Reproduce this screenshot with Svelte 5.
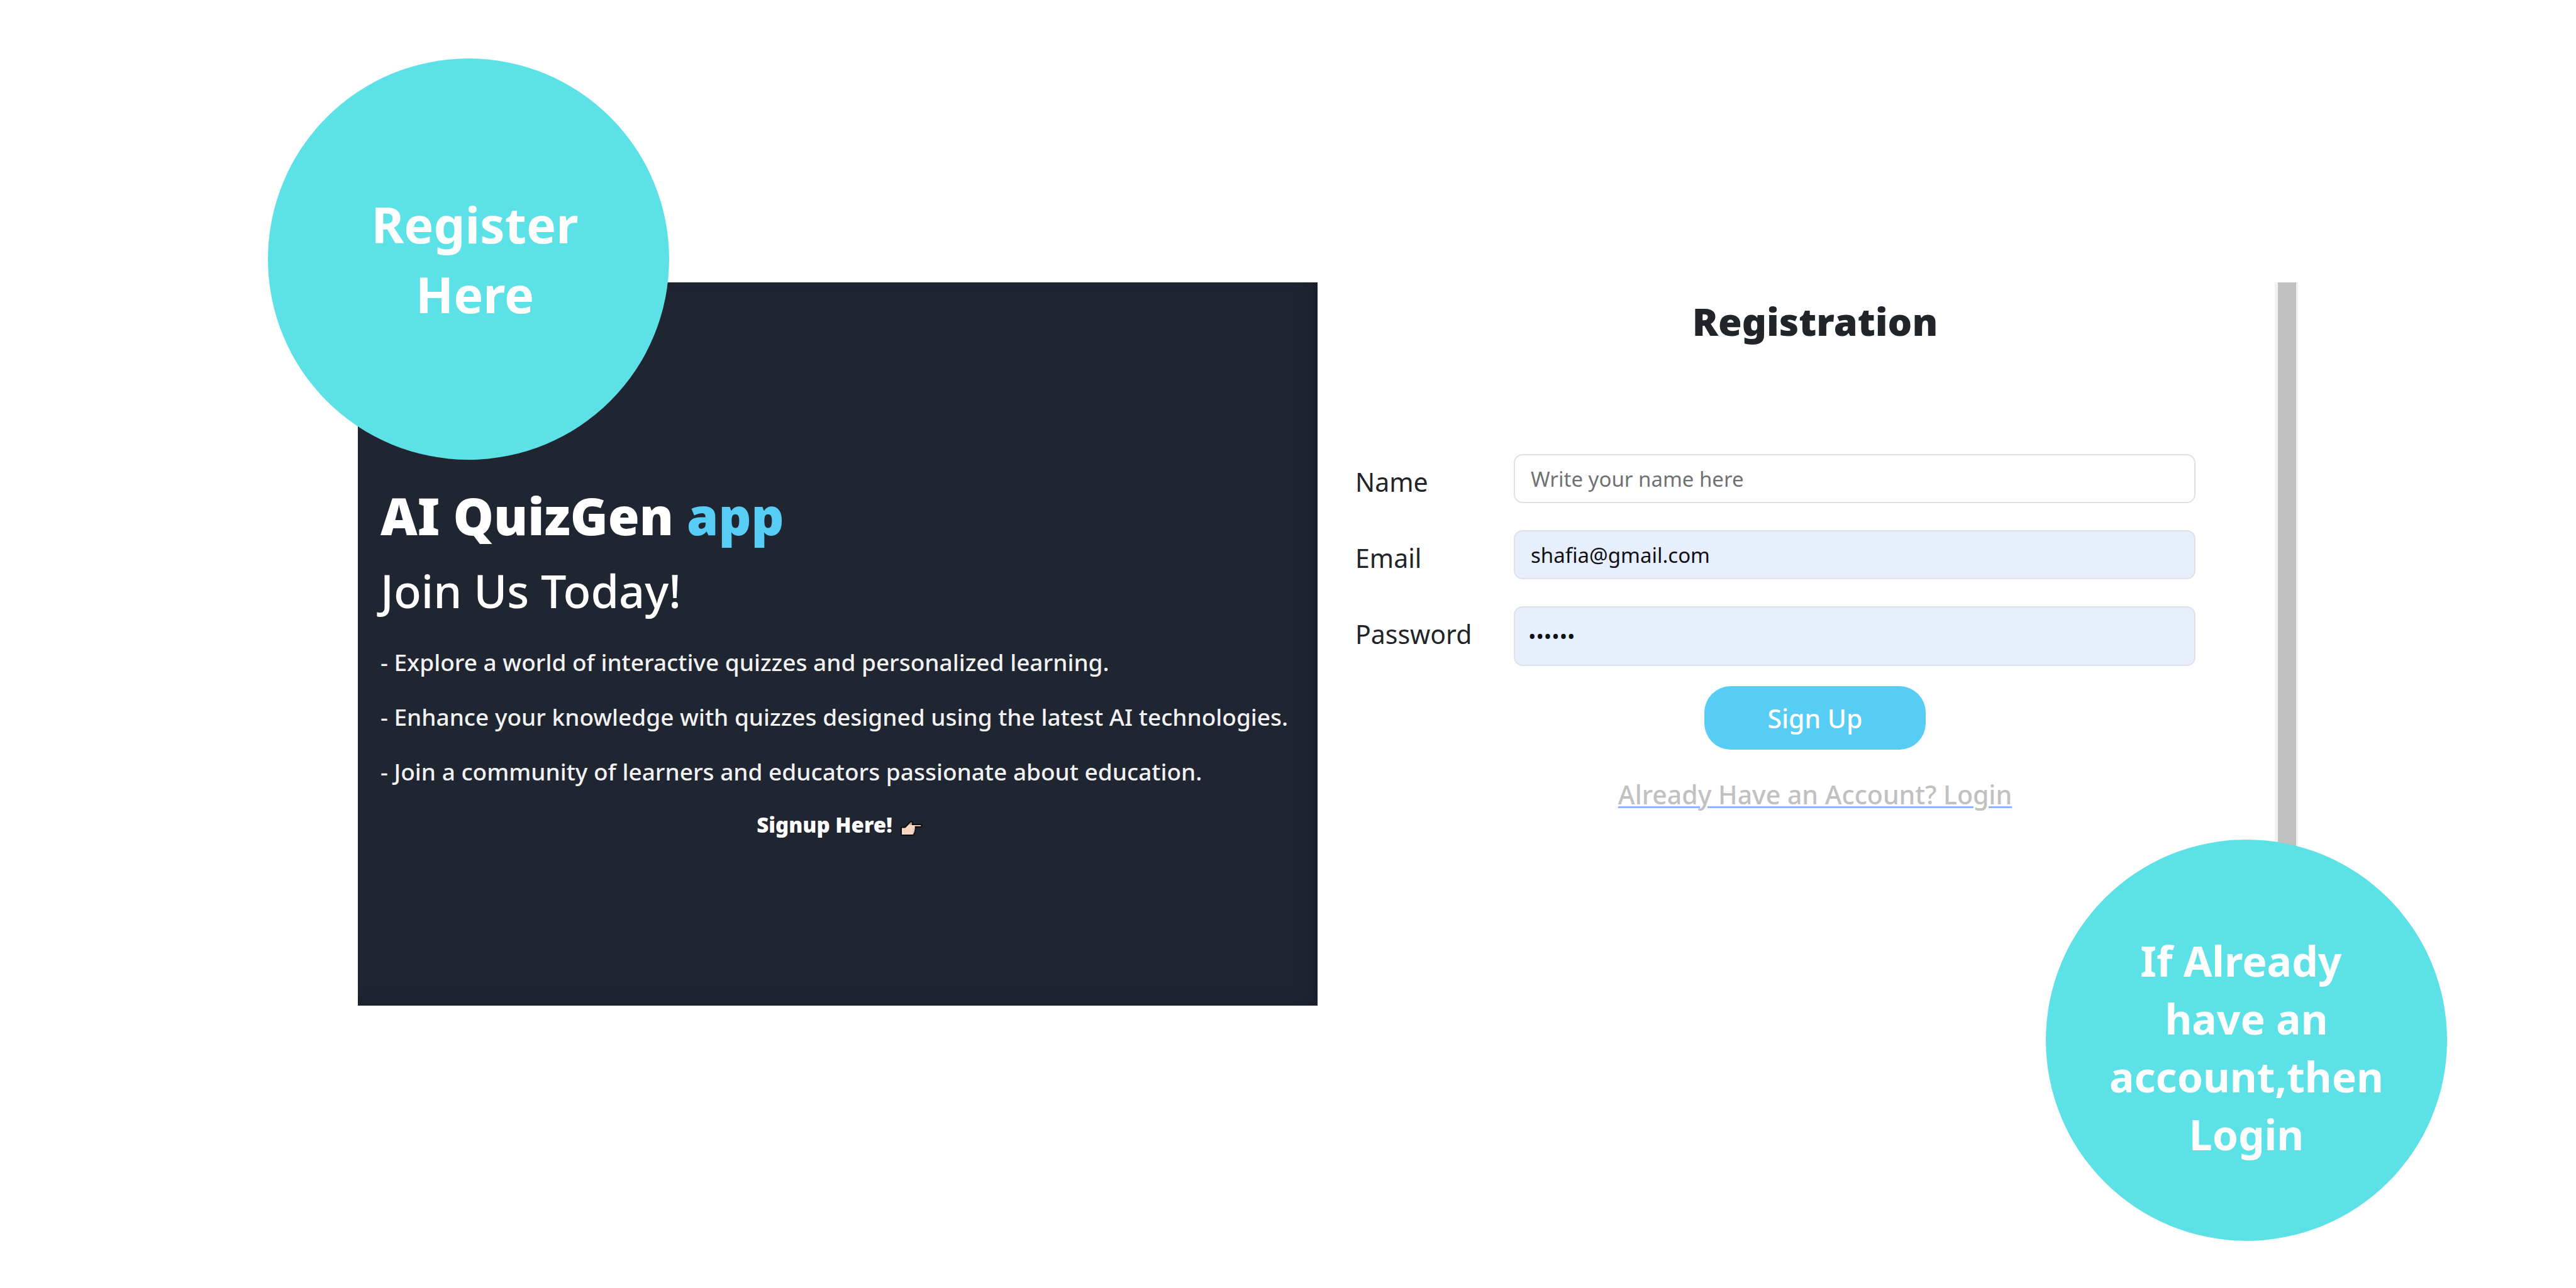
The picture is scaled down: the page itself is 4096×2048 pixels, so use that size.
<script>
  let name = $state('');
  let email = $state('shafia@gmail.com');
  let password = $state('secret');

  const points = [
    'Explore a world of interactive quizzes and personalized learning.',
    'Enhance your knowledge with quizzes designed using the latest AI technologies.',
    'Join a community of learners and educators passionate about education.'
  ];
</script>

<main class="page">
  <div class="window">
    <section class="intro">
      <h1>AI QuizGen <span class="accent">app</span></h1>
      <h2>Join Us Today!</h2>
      <div class="points">
        {#each points as point}
          <p>- {point}</p>
        {/each}
      </div>
      <p class="cue">
        <span>Signup Here!</span>
        <svg class="hand" viewBox="0 0 36 26" aria-hidden="true">
          <path
            d="M2 11.5 H8 L16 3.5 Q18.5 1.5 20 4 L19.5 7 H33 Q34.5 7.2 34.5 8.8 Q34.5 10.6 33 10.8 H24.5 Q25.5 13 24 14.5 Q25 16.5 23.5 18 Q24 20 22.5 21 Q22.5 24 20 24 H2 Z"
            fill="#f7d7c4"
            stroke="#0b0c10"
            stroke-width="2"
            stroke-linejoin="round"
          />
          <path d="M13.5 7 L16.5 4.2 Q18.4 3 19 4.5 L18.4 7.5 Z" fill="#b8937c" />
          <path d="M20 14.5 H24 M20 18 H23.5 M19.5 21 H22" stroke="#d9b29c" stroke-width="1" fill="none" />
        </svg>
      </p>
    </section>

    <section class="signup">
      <h2>Registration</h2>
      <form onsubmit={(e) => e.preventDefault()}>
        <div class="fields">
          <label for="name">Name</label>
          <input id="name" type="text" placeholder="Write your name here" bind:value={name} />
          <label for="email">Email</label>
          <input id="email" class="filled" type="email" bind:value={email} />
          <label for="password">Password</label>
          <input id="password" class="filled tall" type="password" bind:value={password} />
        </div>
        <button type="submit">Sign Up</button>
      </form>
      <a href="#login">Already Have an Account? Login</a>
    </section>

    <div class="track"><div class="thumb"></div></div>
  </div>

  <div class="bubble register"><p>Register<br />Here</p></div>
  <div class="bubble login"><p>If Already&nbsp;<br />have an<br />account,then<br />Login</p></div>
</main>

<style>
  :global(body) {
    margin: 0;
    background: #fff;
  }

  .page {
    position: relative;
    box-sizing: border-box;
    min-height: 100vh;
    padding: 449px 442px 0 569px;
    font-family: 'Noto Sans', sans-serif;
    color: #212529;
  }

  h1,
  h2,
  p {
    margin: 0;
  }

  .window {
    display: grid;
    grid-template-columns: 1526fr 1522fr 37px;
    min-height: 1150px;
  }

  .intro {
    min-width: 0;
    padding: 322px 30px 0 36px;
    background: #202532;
    box-shadow: inset -16px -8px 24px -8px #1b1f2d;
    color: #fff;
  }

  h1 {
    font-size: 81px;
    line-height: 98px;
    font-weight: 900;
  }

  .accent {
    color: #57ccf4;
  }

  .intro h2 {
    margin-top: 27px;
    font-size: 72px;
    line-height: 86px;
    font-weight: 500;
  }

  .points {
    display: flex;
    flex-direction: column;
    gap: 43px;
    margin-top: 49px;
    font-size: 37px;
    line-height: 44px;
    font-weight: 500;
    color: #f2f2f2;
  }

  .cue {
    display: flex;
    justify-content: center;
    gap: 12px;
    margin-top: 41px;
    font-size: 33px;
    line-height: 44px;
    font-weight: 900;
  }

  .hand {
    width: 36px;
    height: 26px;
    margin-top: 14px;
  }

  .signup {
    display: flex;
    flex-direction: column;
    align-items: center;
    padding: 26px 0 0 60px;
  }

  .signup h2 {
    font-size: 61px;
    line-height: 72px;
    font-weight: 900;
  }

  form {
    display: flex;
    flex-direction: column;
    align-items: center;
    align-self: stretch;
    margin-top: 175px;
  }

  .fields {
    display: grid;
    grid-template-columns: 252px 1fr;
    align-self: stretch;
    row-gap: 43px;
    padding-right: 126px;
  }

  label {
    padding-top: 16px;
    font-size: 41px;
    line-height: 56px;
  }

  input {
    box-sizing: border-box;
    width: 100%;
    height: 78px;
    margin: 0;
    padding: 0 25px;
    border: 2px solid #dee2e6;
    border-radius: 14px;
    background: #fff;
    font-family: inherit;
    font-size: 33px;
    color: #101114;
  }

  input::placeholder {
    color: #6f7275;
    opacity: 1;
  }

  .filled {
    background: #e8effc;
  }

  .tall {
    height: 95px;
    padding: 0 21px;
  }

  button {
    width: 352px;
    height: 101px;
    margin-top: 32px;
    padding: 0;
    border: 0;
    border-radius: 42px;
    background: #57ccf4;
    font-family: inherit;
    font-size: 41px;
    line-height: 56px;
    font-weight: 500;
    color: #fff;
  }

  a {
    margin-top: 43px;
    font-size: 41px;
    line-height: 56px;
    font-weight: 500;
    color: #c1c1c1;
    text-decoration: underline #8fb8fb 3px;
    text-underline-offset: 3px;
  }

  .track {
    padding: 0 3px 0 5px;
    background: #f1f1f1;
  }

  .thumb {
    height: 100%;
    background: #c1c1c1;
  }

  .bubble {
    position: absolute;
    display: flex;
    align-items: center;
    justify-content: center;
    box-sizing: border-box;
    width: 638px;
    height: 638px;
    border-radius: 50%;
    background: #5ce2e6;
    color: #fff;
    font-weight: 700;
    text-align: center;
  }

  .register {
    top: 93px;
    left: 426px;
    padding-left: 20px;
    font-size: 79px;
    line-height: 111px;
  }

  .login {
    top: 1335px;
    right: 205px;
    padding-top: 22px;
    font-size: 66px;
    line-height: 92px;
  }
</style>
